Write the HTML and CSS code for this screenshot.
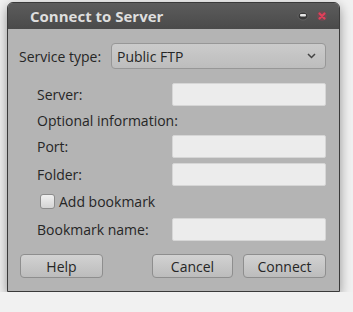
FILE: index.html
```html
<!DOCTYPE html>
<html lang="en">
<head>
    <meta charset="UTF-8">
    <title>Connect to Server</title>
    <link rel="stylesheet" href="styles.css">
</head>
<body>
    <div class="window">
        <div class="titlebar">
            <span class="title">Connect to Server</span>
            <div class="window-controls">
                <svg class="ctl" width="12" height="10" viewBox="0 0 12 10">
                    <ellipse cx="6" cy="5" rx="5" ry="4" fill="#3a3a3a" stroke="#6a6a6a" stroke-width="0.8"/>
                    <rect x="3" y="3" width="6" height="2.5" rx="1" fill="#e6e6e6"/>
                </svg>
                <svg class="ctl" width="12" height="12" viewBox="0 0 12 12">
                    <circle cx="6" cy="6" r="5" fill="#6e4a52"/>
                    <path d="M3.5 3.5 L8.5 8.5 M8.5 3.5 L3.5 8.5" stroke="#e0405a" stroke-width="2.2" stroke-linecap="round"/>
                </svg>
            </div>
        </div>

        <div class="content">
            <div class="service-row">
                <label class="service-label">Service type:</label>
                <div class="combo">
                    <span>Public FTP</span>
                    <svg width="9" height="6" viewBox="0 0 9 6">
                        <path d="M1 1 L4.5 4.5 L8 1" fill="none" stroke="#444" stroke-width="1.5"/>
                    </svg>
                </div>
            </div>

            <div class="form">
                <label>Server:</label>
                <div class="entry"></div>

                <label class="wide">Optional information:</label>

                <label>Port:</label>
                <div class="entry"></div>

                <label>Folder:</label>
                <div class="entry"></div>

                <div class="check wide">
                    <span class="checkbox"></span>
                    <span>Add bookmark</span>
                </div>

                <label>Bookmark name:</label>
                <div class="entry"></div>
            </div>

            <div class="buttons">
                <button>Help</button>
                <div class="spacer"></div>
                <button class="cancel">Cancel</button>
                <button>Connect</button>
            </div>
        </div>
    </div>
</body>
</html>
```

FILE: styles.css
```css
body {
    margin: 0;
    background-color: #f1f1f1;
    font-family: 'Open Sans', 'Liberation Sans', sans-serif;
    font-size: 14px;
    color: #262626;
}
.window {
    margin: 2px 0 0 7px;
    width: 331px;
    height: 288px;
    background-color: #b4b4b4;
    border: 1px solid #3a3a3a;
    border-radius: 6px 6px 0 0;
    box-shadow: 0 4px 12px rgba(0, 0, 0, 0.4);
    display: flex;
    flex-direction: column;
}
.titlebar {
    height: 26px;
    background: linear-gradient(#5c5c5c, #4a4a4a);
    border-radius: 5px 5px 0 0;
    display: flex;
    align-items: center;
    padding-left: 22px;
    padding-right: 11px;
}
.title {
    flex-grow: 1;
    color: #dedede;
    font-weight: bold;
    font-size: 15px;
}
.window-controls {
    display: flex;
    align-items: center;
    gap: 7px;
}
.content {
    padding: 14px 13px 0 11px;
}
.service-row {
    display: flex;
    align-items: center;
}
.service-label {
    width: 92px;
}
.combo {
    flex-grow: 1;
    height: 24px;
    border: 1px solid #979797;
    border-radius: 4px;
    background: linear-gradient(#cbcbcb, #bdbdbd);
    display: flex;
    align-items: center;
    justify-content: space-between;
    padding: 0 9px 0 5px;
}
.form {
    display: grid;
    grid-template-columns: 135px 154px;
    grid-template-rows: 26px 26px 27px 28px 27px 28px;
    margin: 12px 0 0 18px;
    align-items: center;
}
.wide {
    grid-column: 1 / 3;
}
.entry {
    height: 21px;
    background-color: #ececec;
    border: 1px solid #d6d6d6;
    border-radius: 2px;
}
.check {
    display: flex;
    align-items: center;
    gap: 4px;
    padding-left: 3px;
}
.checkbox {
    width: 13px;
    height: 13px;
    border: 1px solid #8c8c8c;
    border-radius: 3px;
    background: linear-gradient(#f0f0f0, #d4d4d4);
}
.buttons {
    display: flex;
    gap: 10px;
    margin-top: 11px;
    padding-left: 1px;
}
.spacer {
    flex-grow: 1;
}
button {
    width: 83px;
    height: 24px;
    font-family: inherit;
    font-size: 14px;
    color: #262626;
    border: 1px solid #8e8e8e;
    border-radius: 4px;
    background: linear-gradient(#d2d2d2, #bcbcbc);
    padding: 0;
}
button.cancel {
    width: 81px;
}
```
